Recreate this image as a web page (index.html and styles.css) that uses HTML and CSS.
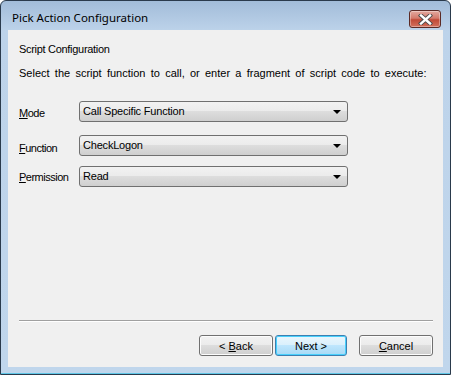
FILE: index.html
```html
<!DOCTYPE html>
<html lang="en">
<head>
  <meta charset="UTF-8">
  <title>Pick Action Configuration</title>
  <link rel="stylesheet" href="styles.css">
</head>
<body>
  <div class="window">
    <div class="titlebar">
      <span class="title">Pick Action Configuration</span>
      <button class="close-btn">
        <svg width="15" height="11" viewBox="0 0 15 11">
          <path d="M3 1.5 L12 9.5 M12 1.5 L3 9.5" stroke="#4a4a4a" stroke-width="4.2" stroke-linecap="square"/>
          <path d="M3 1.5 L12 9.5 M12 1.5 L3 9.5" stroke="#fff" stroke-width="2.4" stroke-linecap="square"/>
        </svg>
      </button>
    </div>

    <div class="client">
      <div class="heading">Script Configuration</div>
      <div class="desc">Select the script function to call, or enter a fragment of script code to execute:</div>

      <div class="form">
        <div class="row row-mode">
          <label><u>M</u>ode</label>
          <div class="combo">Call Specific Function<span class="arrow"></span></div>
        </div>
        <div class="row row-function">
          <label><u>F</u>unction</label>
          <div class="combo">CheckLogon<span class="arrow"></span></div>
        </div>
        <div class="row row-permission">
          <label><u>P</u>ermission</label>
          <div class="combo">Read<span class="arrow"></span></div>
        </div>
      </div>

      <div class="spacer"></div>
      <hr class="separator">

      <div class="buttons">
        <button class="btn">&lt; <u>B</u>ack</button>
        <button class="btn btn-default">Next &gt;</button>
        <button class="btn btn-cancel"><u>C</u>ancel</button>
      </div>
    </div>
  </div>
</body>
</html>
```

FILE: styles.css
```css
body {
  margin: 0;
  padding: 0;
  background: #fff;
  font-family: 'Liberation Sans', Arial, sans-serif;
}

/* Window frame */
.window {
  width: 451px;
  height: 375px;
  box-sizing: border-box;
  border: 1px solid #2a3a4c;
  border-radius: 6px 6px 0 0;
  background: linear-gradient(#a2bcd9, #bdd3ea 30px, #c0d6ec);
  display: flex;
  flex-direction: column;
  padding: 0 7px 7px 7px;
  box-shadow: inset 0 -1px 0 #5fc6e6;
}

.titlebar {
  height: 29px;
  box-sizing: border-box;
  padding-top: 9px;
  display: flex;
  align-items: flex-start;
  justify-content: space-between;
}

.title {
  font-family: 'Noto Sans', sans-serif;
  font-size: 11.5px;
  line-height: 16px;
  color: #000;
  padding-left: 4px;
}

.close-btn {
  width: 32px;
  height: 18px;
  margin-right: 2px;
  padding: 0;
  border: 1px solid #5b2a25;
  border-radius: 3px;
  background: linear-gradient(#e3a99f, #d47b6c 45%, #c14a37 55%, #d3705c);
  box-shadow: inset 0 0 0 1px rgba(255, 255, 255, 0.35);
  display: flex;
  align-items: center;
  justify-content: center;
}

/* Client area */
.client {
  flex: 1;
  background: #f0f0f0;
  display: flex;
  flex-direction: column;
  padding: 0 10px 11px 11px;
  font-size: 11px;
  color: #000;
}

.heading {
  margin-top: 12px;
  line-height: 14px;
  letter-spacing: -0.3px;
}

.desc {
  margin-top: 10px;
  line-height: 14px;
  word-spacing: 2.2px;
}

.form {
  margin-top: 21px;
  display: flex;
  flex-direction: column;
}

.row {
  display: flex;
  align-items: flex-start;
}

.row label {
  width: 60px;
  line-height: 14px;
  letter-spacing: -0.5px;
}

.row-mode label { margin-top: 5px; }
.row-function { margin-top: 13px; }
.row-function label { margin-top: 6px; }
.row-permission { margin-top: 10px; }
.row-permission label { margin-top: 4px; }

.combo {
  position: relative;
  width: 269px;
  height: 21px;
  box-sizing: border-box;
  border: 1px solid #707070;
  border-radius: 3px;
  background: linear-gradient(#f2f2f2, #ebebeb 50%, #dddddd 50%, #cfcfcf);
  padding: 2px 0 0 3px;
  line-height: 14px;
  letter-spacing: -0.2px;
}

.arrow {
  position: absolute;
  right: 6px;
  top: 8px;
  width: 0;
  height: 0;
  border-left: 4px solid transparent;
  border-right: 4px solid transparent;
  border-top: 4px solid #000;
}

.spacer {
  flex: 1;
}

.separator {
  margin: 0;
  border: none;
  border-top: 1px solid #a0a0a0;
  border-bottom: 1px solid #fff;
}

.buttons {
  margin-top: 13px;
  display: flex;
  justify-content: flex-end;
  gap: 2px;
}

.btn {
  width: 74px;
  height: 21px;
  padding: 0;
  font-family: 'Liberation Sans', Arial, sans-serif;
  font-size: 11px;
  color: #000;
  border: 1px solid #707070;
  border-radius: 3px;
  background: linear-gradient(#f2f2f2, #ebebeb 50%, #dddddd 50%, #cfcfcf);
  box-shadow: inset 0 0 0 1px #fcfcfc;
}

.btn-default {
  width: 72px;
  border-color: #3c7fb1;
  background: linear-gradient(#eaf6fd, #d9f0fc 50%, #bee6fd 50%, #a7d9f5);
  box-shadow: inset 0 0 0 1px #48d0fc;
}

.btn-cancel {
  margin-left: 10px;
}
```
